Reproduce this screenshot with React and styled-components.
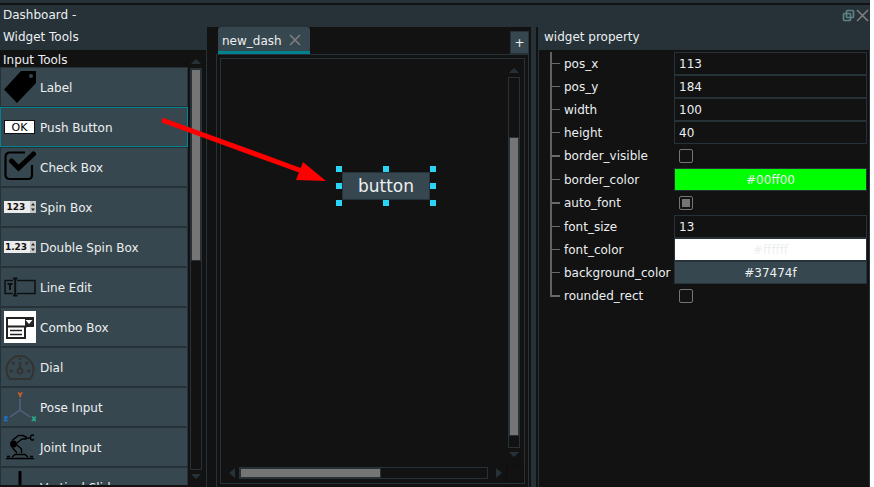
import React, { useState } from 'react';
import styled, { createGlobalStyle } from 'styled-components';

const SLATE = '#263238';
const DARK = '#121212';
const PANEL = '#37474f';
const ACCENT = '#00838f';
const GREY = '#757575';

const ICONS = {
  label: (
    <>
      <path d="M17 0H32V12L13 32L0 18.500Z" fill="#000" />
      <circle cx="27" cy="5" r="2" fill={PANEL} />
    </>
  ),
  push: (
    <>
      <rect x="0.500" y="9.500" width="30" height="13" fill="#fff" stroke="#111" />
      <text x="15.500" y="20" fontSize="11" textAnchor="middle" fill="#000">OK</text>
    </>
  ),
  check: (
    <>
      <path d="M21 1.500H6Q1.500 1.500 1.500 6V24Q1.500 28 6 28H24Q28 28 28 24V14" fill="none" stroke="#000" strokeWidth="2.200" />
      <path d="M7.500 10L14.500 17L29.500 3" fill="none" stroke="#000" strokeWidth="5" strokeLinecap="round" />
    </>
  ),
  spin: <SpinDrawing text="123" />,
  doubleSpin: <SpinDrawing text="1.23" />,
  line: (
    <g fill="none" stroke="#0c1012" strokeWidth="1.500">
      <path d="M9 9.500H1V22.500H9M13 9.500H31V22.500H13" />
      <path d="M9 7.500H13.500M11.200 7.500V24.500M9 24.500H13.500" strokeWidth="2" />
      <path d="M3.500 13H8.500M6 13V19" strokeWidth="2" />
    </g>
  ),
  combo: (
    <>
      <rect width="32" height="32" fill="#fff" />
      <path d="M3 7H22V15.500H3ZM3 15.500H21V27H3Z" fill="none" stroke="#222" strokeWidth="2" />
      <path d="M21 6H30V16H21Z" fill="#222" />
      <path d="M21.500 9H28.500L25 13Z" fill="#fff" />
      <path d="M6 19.500H18M6 23.500H18" stroke="#222" strokeWidth="1.700" />
    </>
  ),
  dial: (
    <g fill="none" stroke="#333" strokeWidth="2">
      <path d="M6 28Q2.500 24 2.500 18.500A13.500 13.500 0 0 1 29.500 18.500Q29.500 24 26 28Z" />
      <circle cx="16" cy="20" r="2.500" />
      <path d="M16 17V11" strokeWidth="2.500" />
      <path d="M5.500 20H9M23 20H26.500M8 11L10.500 13.500M24 11L21.500 13.500M16 7V9" strokeWidth="2.500" />
    </g>
  ),
  pose: (
    <>
      <path d="M16 8V19L6 26M16 19L26 26" fill="none" stroke="#55627f" strokeWidth="1.500" />
      <g fontSize="6" fontWeight="bold" textAnchor="middle" strokeWidth="0.500">
        <text x="16" y="6" fill="#d2622a" stroke="#d2622a">Y</text>
        <text x="2" y="30" fill="#1976d2" stroke="#1976d2">Z</text>
        <text x="30" y="30" fill="#22b08c" stroke="#22b08c">X</text>
      </g>
    </>
  ),
  joint: (
    <g fill="none" stroke="#000" strokeWidth="1.400">
      <circle cx="9.500" cy="13" r="2.800" fill="#000" />
      <path d="M8 9.500L14.500 4.500H19L22 6V8H18L13 12" />
      <path d="M22 7H27" />
      <path d="M30 4.500Q26.500 3 26.500 6.700Q26.500 10 30 8.500" />
      <path d="M8 16L13 22M12.500 13.500L17.500 18V22" />
      <path d="M8 26L11 23.500H21L24 26M2 27.500H30M3 25.500H6M26 25.500H29" />
    </g>
  ),
  slider: <path d="M16 0V32" stroke="#000" strokeWidth="3" />,
};

const TOOLS = [
  { name: 'Label', icon: 'label' },
  { name: 'Push Button', icon: 'push' },
  { name: 'Check Box', icon: 'check' },
  { name: 'Spin Box', icon: 'spin' },
  { name: 'Double Spin Box', icon: 'doubleSpin' },
  { name: 'Line Edit', icon: 'line' },
  { name: 'Combo Box', icon: 'combo' },
  { name: 'Dial', icon: 'dial' },
  { name: 'Pose Input', icon: 'pose' },
  { name: 'Joint Input', icon: 'joint' },
  { name: 'Vertical Slider', icon: 'slider' },
];

const PROPERTIES = [
  { name: 'pos_x', type: 'text', value: '113' },
  { name: 'pos_y', type: 'text', value: '184' },
  { name: 'width', type: 'text', value: '100' },
  { name: 'height', type: 'text', value: '40' },
  { name: 'border_visible', type: 'bool', value: false },
  { name: 'border_color', type: 'color', value: '#00ff00' },
  { name: 'auto_font', type: 'bool', value: true },
  { name: 'font_size', type: 'text', value: '13' },
  { name: 'font_color', type: 'color', value: '#ffffff' },
  { name: 'background_color', type: 'color', value: '#37474f' },
  { name: 'rounded_rect', type: 'bool', value: false },
];

function SpinDrawing({ text }) {
  return (
    <>
      <rect y="10" width="32" height="12" fill="#ececec" />
      <rect x="26" y="10" width="6" height="12" fill="#c8c8c8" />
      <text x="12" y="19" fontSize="9" fontWeight="bold" textAnchor="middle" fill="#111">{text}</text>
      <path d="M27 14.500L29 12L31 14.500ZM27 17.500L29 20L31 17.500Z" fill="#222" />
    </>
  );
}

function ScrollBar({ start, size, horizontal }) {
  const Bar = horizontal ? HorizontalBar : VerticalBar;
  return (
    <Bar>
      <ArrowSlot $horizontal={horizontal}>
        <svg width={horizontal ? 6 : 10} height={horizontal ? 10 : 5}>
          <path d={horizontal ? 'M6 0V10L0 5Z' : 'M0 5H10L5 0Z'} fill={SLATE} />
        </svg>
      </ArrowSlot>
      <Track $horizontal={horizontal}>
        <Spacer $size={start} />
        <Thumb $size={size} />
      </Track>
      <ArrowSlot $horizontal={horizontal}>
        <svg width={horizontal ? 6 : 10} height={horizontal ? 10 : 5}>
          <path d={horizontal ? 'M0 0V10L6 5Z' : 'M0 0H10L5 5Z'} fill={SLATE} />
        </svg>
      </ArrowSlot>
    </Bar>
  );
}

function PropertyField({ name, type, value }) {
  const [current, setCurrent] = useState(value);

  if (type === 'bool') {
    return (
      <CheckCell>
        <CheckInput id={name} type="checkbox" checked={current} onChange={() => setCurrent(!current)} />
      </CheckCell>
    );
  }
  if (type === 'color') {
    return <ColorButton id={name} type="button" $color={value}>{value}</ColorButton>;
  }
  return <TextInput id={name} type="text" value={current} onChange={(e) => setCurrent(e.target.value)} />;
}

function App() {
  const [selected, setSelected] = useState('Push Button');

  return (
    <>
      <GlobalStyle />
      <Window>
        <TitleBar>
          <span>Dashboard -</span>
          <TitleActions>
            <IconButton type="button" aria-label="Float">
              <svg width="13" height="13" viewBox="0 0 13 13" fill="none" stroke="#5f8285" strokeWidth="1.700">
                <rect x="4.500" y="1.500" width="7" height="7" rx="1" />
                <rect x="1.500" y="4.500" width="7" height="7" rx="1" />
              </svg>
            </IconButton>
            <IconButton type="button" aria-label="Close">
              <svg width="13" height="13" viewBox="0 0 13 13" stroke="#808080" strokeWidth="1.500">
                <path d="M1 1L12 12M12 1L1 12" />
              </svg>
            </IconButton>
          </TitleActions>
        </TitleBar>
        <Body>
          <ToolPanel>
            <PanelHeader>Widget Tools</PanelHeader>
            <ToolArea>
              <ToolList>
                <GroupName>Input Tools</GroupName>
                {TOOLS.map(({ name, icon }) => (
                  <ToolButton
                    key={name}
                    type="button"
                    $selected={name === selected}
                    onClick={() => setSelected(name)}
                  >
                    <svg width="32" height="32" viewBox="0 0 32 32">{ICONS[icon]}</svg>
                    <ToolName>{name}</ToolName>
                  </ToolButton>
                ))}
              </ToolList>
              <ScrollBar start={0} size={48} />
            </ToolArea>
          </ToolPanel>

          <Workspace>
            <TabBar>
              <Tab>
                <ToolName>new_dash</ToolName>
                <IconButton type="button" aria-label="Close tab">
                  <svg width="12" height="12" viewBox="0 0 12 12" stroke="#808080" strokeWidth="1.500">
                    <path d="M1 1L11 11M11 1L1 11" />
                  </svg>
                </IconButton>
              </Tab>
              <AddTab type="button">+</AddTab>
            </TabBar>
            <TabPane>
              <CanvasFrame>
                <Canvas>
                  <Selection>
                    <CanvasButton type="button">button</CanvasButton>
                    {[0, 1, 2].map((row) => [0, 1, 2].map((col) => (
                      row === 1 && col === 1 ? null : <Handle key={`${row}${col}`} $row={row} $col={col} />
                    )))}
                  </Selection>
                </Canvas>
                <ScrollBar start={16} size={81} />
                <ScrollBar start={0} size={57} horizontal />
                <Corner />
              </CanvasFrame>
            </TabPane>
          </Workspace>

          <Splitter />

          <PropertyPanel>
            <PanelHeader>widget property</PanelHeader>
            <PropertyTree>
              {PROPERTIES.map((prop, i) => (
                <PropertyRow key={prop.name}>
                  <PropertyLabel htmlFor={prop.name} $last={i === PROPERTIES.length - 1}>
                    <Branch $thick={prop.type === 'bool'} />
                    {prop.name}
                  </PropertyLabel>
                  <PropertyField {...prop} />
                </PropertyRow>
              ))}
            </PropertyTree>
          </PropertyPanel>
        </Body>
        <DragArrow width="170" height="70" viewBox="0 0 170 70">
          <path d="M5 4L145 55" stroke="#f00" strokeWidth="5" />
          <path d="M146 46L169 65L139 64Z" fill="#f00" />
        </DragArrow>
      </Window>
    </>
  );
}

const GlobalStyle = createGlobalStyle`
  * {
    box-sizing: border-box;
  }
  body {
    margin: 0;
    background: #fff;
    color: #eceff1;
    font: 12px/16px "DejaVu Sans", sans-serif;
  }
  button, input {
    margin: 0;
    font: inherit;
    color: inherit;
  }
  svg {
    display: block;
    flex: none;
  }
`;

const Window = styled.div`
  position: relative;
  display: flex;
  flex-direction: column;
  height: 100vh;
  margin-right: 4px;
  padding-top: 3px;
  overflow: hidden;
  background: ${SLATE};
`;

const TitleBar = styled.header`
  display: flex;
  align-items: center;
  justify-content: space-between;
  flex: none;
  height: 24px;
  padding: 0 1px 2px 3px;
  border-top: 2px solid ${DARK};
`;

const TitleActions = styled.div`
  display: flex;
  gap: 1px;
`;

const IconButton = styled.button`
  padding: 0;
  border: none;
  background: none;
`;

const Body = styled.main`
  display: grid;
  grid-template-columns: 207px minmax(0, 324fr) 5px minmax(0, 334fr);
  flex: 1;
  min-height: 0;
`;

const Column = styled.section`
  display: flex;
  flex-direction: column;
  min-width: 0;
  min-height: 0;
  background: ${DARK};
`;

const ToolPanel = styled(Column)`
  border-right: 1px solid ${SLATE};
`;

const PanelHeader = styled.h2`
  flex: none;
  height: 23px;
  margin: 0;
  padding: 2px 3px;
  background: ${SLATE};
  font-size: 12px;
  font-weight: normal;
`;

const ToolArea = styled.div`
  display: grid;
  grid-template-columns: 188px 18px;
  grid-template-rows: minmax(0, 1fr);
  flex: 1;
  min-height: 0;
`;

const ToolList = styled.div`
  margin-bottom: 2px;
  overflow: hidden;
`;

const GroupName = styled.div`
  height: 17px;
  padding: 2px 3px 0;
`;

const ToolButton = styled.button`
  display: flex;
  align-items: center;
  gap: 4px;
  width: 100%;
  height: 40px;
  padding: 0 3px;
  border: 1px solid ${(props) => (props.$selected ? ACCENT : SLATE)};
  background: ${PANEL};
`;

const ToolName = styled.span`
  padding-top: 2px;
`;

const VerticalBar = styled.div`
  display: flex;
  flex-direction: column;
  align-items: center;
  width: 12px;
  min-height: 0;
  margin-left: 2px;
  padding-top: 9px;
  padding-bottom: 8px;
  gap: 4px;
`;

const HorizontalBar = styled.div`
  display: flex;
  align-items: center;
  height: 12px;
  margin-top: 2px;
`;

const ArrowSlot = styled.div`
  display: flex;
  justify-content: flex-end;
  flex: none;
  width: ${(props) => (props.$horizontal ? '18px' : 'auto')};
  padding-right: ${(props) => (props.$horizontal ? '4px' : '0')};
`;

const Track = styled.div`
  display: flex;
  flex-direction: ${(props) => (props.$horizontal ? 'row' : 'column')};
  flex: 1;
  align-self: stretch;
  min-height: 0;
  border: 1px solid ${SLATE};
`;

const Spacer = styled.div`
  flex: 0 0 ${(props) => props.$size}%;
`;

const Thumb = styled.div`
  flex: 0 0 ${(props) => props.$size}%;
  border: 1px solid ${SLATE};
  background: ${GREY};
`;

const Workspace = styled(Column)`
  padding: 0 2px 0 9px;
`;

const TabBar = styled.div`
  display: flex;
  align-items: flex-end;
  justify-content: space-between;
  flex: none;
  height: 27px;
  padding-left: 2px;
`;

const Tab = styled.div`
  display: flex;
  align-items: center;
  gap: 7px;
  height: 27px;
  padding: 2px 9px 0 4px;
  border-bottom: 3px solid ${ACCENT};
  border-radius: 3px 3px 0 0;
  background: ${PANEL};
`;

const AddTab = styled.button`
  width: 19px;
  height: 23px;
  padding: 0;
  border: 1px solid ${SLATE};
  background: ${PANEL};
`;

const TabPane = styled.div`
  display: flex;
  flex: 1;
  min-height: 0;
  padding: 3px;
  border: solid ${SLATE};
  border-width: 1px 1px 0;
`;

const CanvasFrame = styled.div`
  display: grid;
  grid-template-columns: minmax(0, 1fr) 18px;
  grid-template-rows: minmax(0, 1fr) 18px;
  flex: 1;
  border: 1px solid ${SLATE};
`;

const Canvas = styled.div`
  position: relative;
  overflow: hidden;
`;

const Corner = styled.div`
  margin-bottom: 1px;
  border: 1px solid #0e0e0e;
`;

const Selection = styled.div`
  position: absolute;
  left: 115px;
  top: 107px;
  width: 100px;
  height: 40px;
  padding: 6px;
`;

const CanvasButton = styled.button`
  width: 100%;
  height: 100%;
  padding: 0;
  border: 1px solid ${SLATE};
  background: ${PANEL};
  font-size: 17px;
  line-height: 20px;
`;

const Handle = styled.span`
  position: absolute;
  left: calc((100% - 6px) * ${(props) => props.$col / 2});
  top: calc((100% - 6px) * ${(props) => props.$row / 2});
  width: 6px;
  height: 6px;
  background: #2ad4f5;
`;

const Splitter = styled.div`
  background: ${SLATE};
`;

const PropertyPanel = styled(Column)`
  padding-left: 2px;

  & > * {
    border-left: 1px solid ${SLATE};
    border-right: 1px solid ${SLATE};
  }
  & > h2 {
    padding-left: 5px;
  }
`;

const PropertyTree = styled.div`
  flex: 1;
  min-height: 0;
  padding: 2px 2px 0 11px;
`;

const PropertyRow = styled.div`
  display: grid;
  grid-template-columns: 124px minmax(0, 1fr);
`;

const PropertyLabel = styled.label`
  display: flex;
  align-items: center;
  background: linear-gradient(#616161, #616161) no-repeat 0 0 / 2px ${(props) => (props.$last ? '54%' : '100%')};
`;

const Branch = styled.span`
  flex: none;
  width: 9px;
  height: ${(props) => (props.$thick ? '2px' : '1px')};
  margin: 0 4px 0 1px;
  background: #6a6a6a;
`;

const TextInput = styled.input`
  width: 100%;
  height: 23px;
  padding: 0 4px;
  border: 1px solid ${SLATE};
  border-radius: 0;
  outline: none;
  background: ${DARK};
`;

const ColorButton = styled.button`
  width: 100%;
  height: 23px;
  padding: 0;
  border: 1px solid ${SLATE};
  background: ${(props) => props.$color};
`;

const CheckCell = styled.div`
  display: flex;
  align-items: center;
  height: 24px;
  padding-left: 5px;
`;

const CheckInput = styled.input`
  appearance: none;
  width: 14px;
  height: 14px;
  padding: 2px;
  border: 1px solid ${GREY};
  border-radius: 2px;
  background: ${(props) => (props.checked ? GREY : 'transparent')} content-box;
`;

// drag hint from the tool list to the canvas
const DragArrow = styled.svg`
  position: absolute;
  left: 157px;
  top: 116px;
  pointer-events: none;
`;

export default App;
